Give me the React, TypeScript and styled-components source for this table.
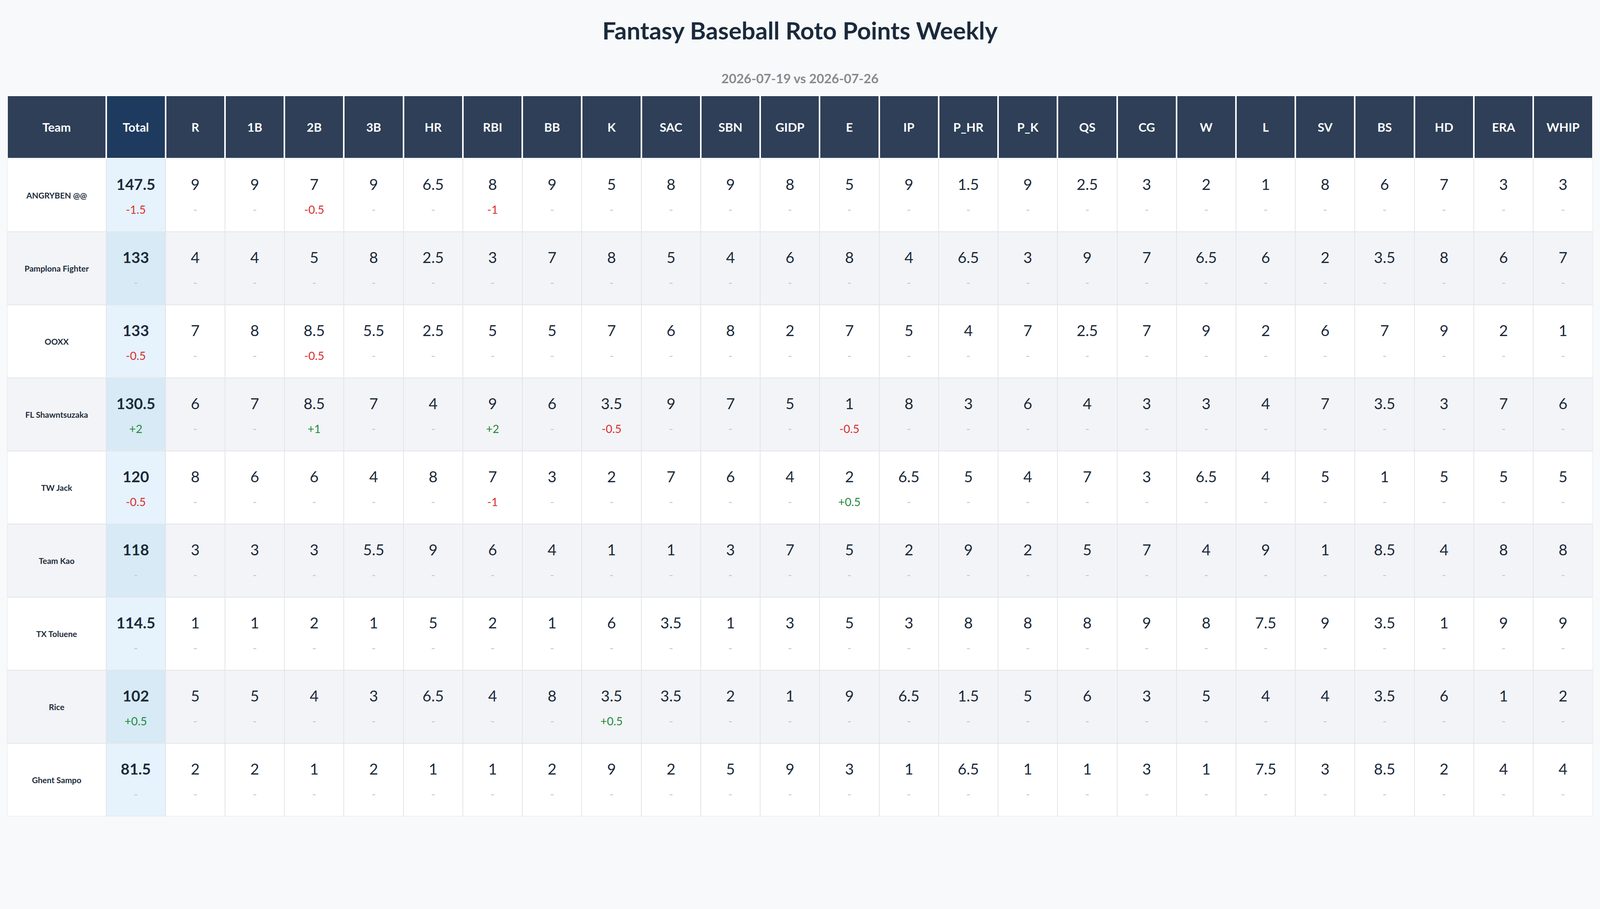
import styled, { createGlobalStyle } from 'styled-components';

const GlobalStyle = createGlobalStyle`
  html, body {
    margin: 0;
    padding: 0;
    background: #f7f9fb;
    font-family: Lato, "Noto Sans", sans-serif;
    color: #1c2a3a;
  }
`

const Page = styled.div`
  padding: 40px 0.45vw 0;
`

const Title = styled.h1`
  margin: 0;
  text-align: center;
  font-size: 62px;
  line-height: 74px;
  font-weight: 700;
  color: #1b2a3b;
`

const Subtitle = styled.div`
  margin: 66px 0 24px;
  text-align: center;
  font-size: 33px;
  line-height: 40px;
  font-weight: 700;
  color: #8a8a8a;
`

const Table = styled.table`
  width: 100%;
  table-layout: fixed;
  border-collapse: separate;
  border-spacing: 0;
  background: #ffffff;
`

const HeadCell = styled.th<{ $total?: boolean; $team?: boolean }>`
  width: ${(p) => (p.$team ? 'calc(6.18vw - 4px)' : 'auto')};
  height: 158px;
  padding: 0;
  border: 2px solid #ffffff;
  background: ${(p) => (p.$total ? '#1e3a5e' : '#2e3f57')};
  color: #ffffff;
  font-size: 31px;
  font-weight: 700;
  text-align: center;
  vertical-align: middle;
`

const Row = styled.tr<{ $alt: boolean }>`
  background: ${(p) => (p.$alt ? '#f3f4f7' : '#ffffff')};
`

const TeamCell = styled.td`
  height: 185px;
  padding: 0 8px;
  border: 1px solid #e3e5e8;
  text-align: center;
  vertical-align: middle;
  font-size: 21px;
  font-weight: 700;
  color: #1c2a3a;
`

const ScoreCell = styled.td<{ $total?: boolean; $alt: boolean }>`
  height: 185px;
  padding: 0;
  border: 1px solid #e3e5e8;
  text-align: center;
  vertical-align: middle;
  background: ${(p) => (p.$total ? (p.$alt ? '#d7eaf5' : '#e6f2fc') : 'transparent')};
`

const Value = styled.div<{ $bold?: boolean }>`
  font-size: 39px;
  line-height: 52px;
  font-weight: ${(p) => (p.$bold ? 700 : 400)};
  color: #1c2a3a;
`

const Delta = styled.div<{ $tone: 'up' | 'down' | 'none' }>`
  margin-top: 20px;
  font-size: 29px;
  line-height: 38px;
  color: ${(p) => (p.$tone === 'up' ? '#1f8a3b' : p.$tone === 'down' ? '#d92d2d' : '#c4c4c4')};
`

const stats = ['R', '1B', '2B', '3B', 'HR', 'RBI', 'BB', 'K', 'SAC', 'SBN', 'GIDP', 'E', 'IP', 'P_HR', 'P_K', 'QS', 'CG', 'W', 'L', 'SV', 'BS', 'HD', 'ERA', 'WHIP'];

type TeamRow = {
  team: string;
  total: number;
  totalDelta: number;
  values: number[];
  deltas: Record<string, number>;
};

const rows: TeamRow[] = [
  { team: 'ANGRYBEN @@', total: 147.5, totalDelta: -1.5, values: [9, 9, 7, 9, 6.5, 8, 9, 5, 8, 9, 8, 5, 9, 1.5, 9, 2.5, 3, 2, 1, 8, 6, 7, 3, 3], deltas: { '2B': -0.5, RBI: -1 } },
  { team: 'Pamplona Fighter', total: 133, totalDelta: 0, values: [4, 4, 5, 8, 2.5, 3, 7, 8, 5, 4, 6, 8, 4, 6.5, 3, 9, 7, 6.5, 6, 2, 3.5, 8, 6, 7], deltas: {} },
  { team: 'OOXX', total: 133, totalDelta: -0.5, values: [7, 8, 8.5, 5.5, 2.5, 5, 5, 7, 6, 8, 2, 7, 5, 4, 7, 2.5, 7, 9, 2, 6, 7, 9, 2, 1], deltas: { '2B': -0.5 } },
  { team: 'FL Shawntsuzaka', total: 130.5, totalDelta: 2, values: [6, 7, 8.5, 7, 4, 9, 6, 3.5, 9, 7, 5, 1, 8, 3, 6, 4, 3, 3, 4, 7, 3.5, 3, 7, 6], deltas: { '2B': 1, RBI: 2, K: -0.5, E: -0.5 } },
  { team: 'TW Jack', total: 120, totalDelta: -0.5, values: [8, 6, 6, 4, 8, 7, 3, 2, 7, 6, 4, 2, 6.5, 5, 4, 7, 3, 6.5, 4, 5, 1, 5, 5, 5], deltas: { RBI: -1, E: 0.5 } },
  { team: 'Team Kao', total: 118, totalDelta: 0, values: [3, 3, 3, 5.5, 9, 6, 4, 1, 1, 3, 7, 5, 2, 9, 2, 5, 7, 4, 9, 1, 8.5, 4, 8, 8], deltas: {} },
  { team: 'TX Toluene', total: 114.5, totalDelta: 0, values: [1, 1, 2, 1, 5, 2, 1, 6, 3.5, 1, 3, 5, 3, 8, 8, 8, 9, 8, 7.5, 9, 3.5, 1, 9, 9], deltas: {} },
  { team: 'Rice', total: 102, totalDelta: 0.5, values: [5, 5, 4, 3, 6.5, 4, 8, 3.5, 3.5, 2, 1, 9, 6.5, 1.5, 5, 6, 3, 5, 4, 4, 3.5, 6, 1, 2], deltas: { K: 0.5 } },
  { team: 'Ghent Sampo', total: 81.5, totalDelta: 0, values: [2, 2, 1, 2, 1, 1, 2, 9, 2, 5, 9, 3, 1, 6.5, 1, 1, 3, 1, 7.5, 3, 8.5, 2, 4, 4], deltas: {} },
];

const DeltaText = ({ value }: { value?: number }) => {
  if (!value) return <Delta $tone="none">-</Delta>;
  return <Delta $tone={value > 0 ? 'up' : 'down'}>{value > 0 ? `+${value}` : value}</Delta>;
};

export default function App() {
  return (
    <Page>
      <GlobalStyle />
      <Title>Fantasy Baseball Roto Points Weekly</Title>
      <Subtitle>2026-07-19 vs 2026-07-26</Subtitle>
      <Table>
        <thead>
          <tr>
            <HeadCell $team>Team</HeadCell>
            <HeadCell $total>Total</HeadCell>
            {stats.map((s) => (
              <HeadCell key={s}>{s}</HeadCell>
            ))}
          </tr>
        </thead>
        <tbody>
          {rows.map((r, i) => {
            const alt = i % 2 === 1;
            return (
              <Row key={r.team} $alt={alt}>
                <TeamCell>{r.team}</TeamCell>
                <ScoreCell $total $alt={alt}>
                  <Value $bold>{r.total}</Value>
                  <DeltaText value={r.totalDelta} />
                </ScoreCell>
                {stats.map((s, j) => (
                  <ScoreCell key={s} $alt={alt}>
                    <Value>{r.values[j]}</Value>
                    <DeltaText value={r.deltas[s]} />
                  </ScoreCell>
                ))}
              </Row>
            );
          })}
        </tbody>
      </Table>
    </Page>
  );
}
